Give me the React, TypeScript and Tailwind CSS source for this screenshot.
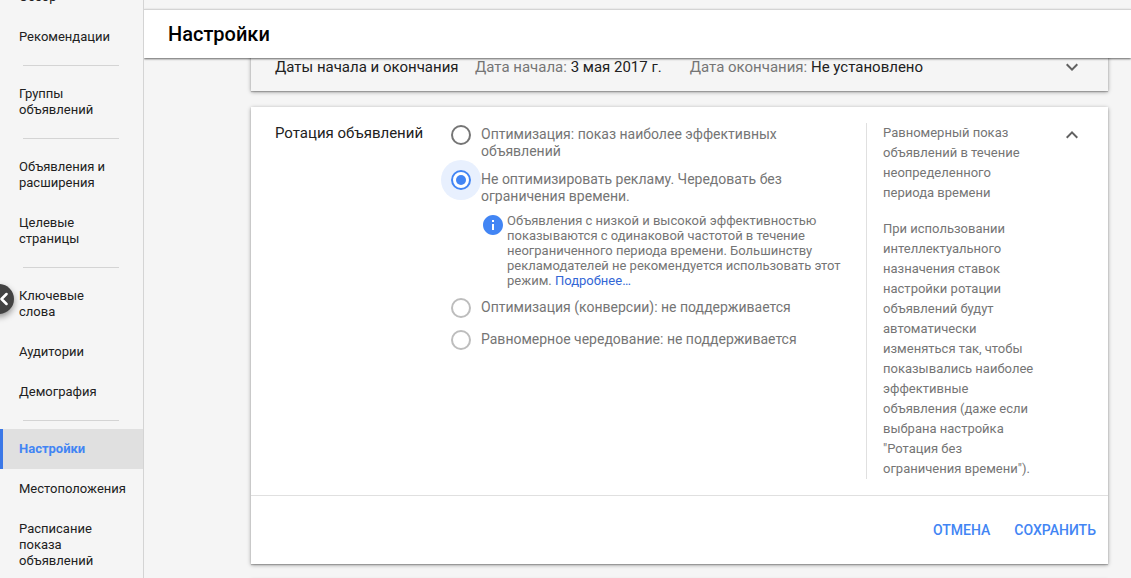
import { ChevronLeft } from 'lucide-react';
import { MdExpandLess, MdExpandMore, MdInfo } from 'react-icons/md';

type NavItem = { label: string; active?: boolean };

const navGroups: NavItem[][] = [
  [{ label: 'Обзор' }, { label: 'Рекомендации' }],
  [{ label: 'Группы объявлений' }],
  [{ label: 'Объявления и расширения' }, { label: 'Целевые страницы' }],
  [{ label: 'Ключевые слова' }, { label: 'Аудитории' }, { label: 'Демография' }],
  [
    { label: 'Настройки', active: true },
    { label: 'Местоположения' },
    { label: 'Расписание показа объявлений' },
  ],
];

function Sidebar() {
  return (
    <nav className="relative w-36 shrink-0 border-r border-[#d4d4d4]">
      {/* list is scrolled a little, so the first entry is cut off */}
      <div className="h-full overflow-hidden">
        <div className="-mt-[23px]">
          {navGroups.map((group, i) => (
            <div key={i}>
              {i > 0 && <hr className="my-2 mr-6 ml-[23px] border-t border-[#d4d4d4]" />}
              <ul>
                {group.map((item) => (
                  <li key={item.label}>
                    <a
                      href="#"
                      aria-current={item.active ? 'page' : undefined}
                      className={
                        item.active
                          ? 'block border-l-3 border-[#3b78e7] bg-[#e0e0e0] py-3 pr-6 pl-4 text-[13px] leading-4 font-bold text-[#4285f4]'
                          : 'block py-3 pr-6 pl-[19px] text-[13px] leading-4 text-[#212121]'
                      }
                    >
                      {item.label}
                    </a>
                  </li>
                ))}
              </ul>
            </div>
          ))}
        </div>
      </div>
      <button
        type="button"
        aria-label="Свернуть меню"
        className="absolute top-[284px] -left-4 flex size-[30px] items-center justify-end rounded-full bg-[#424242] text-white shadow-[0_3px_6px_rgba(0,0,0,0.4)]"
      >
        <ChevronLeft className="size-5" strokeWidth={3} />
      </button>
    </nav>
  );
}

type RadioOptionProps = {
  id: string;
  label: string;
  checked?: boolean;
  disabled?: boolean;
  children?: React.ReactNode;
};

function RadioOption({ id, label, checked, disabled, children }: RadioOptionProps) {
  return (
    <div className="flex min-h-[22px] items-start gap-[10px]">
      <input
        type="radio"
        id={id}
        name="rotation"
        defaultChecked={checked}
        disabled={disabled}
        className="grid size-5 shrink-0 appearance-none place-content-center rounded-full border-2 border-[#757575] before:size-[10px] before:rounded-full checked:border-[#4285f4] checked:shadow-[0_0_0_10px_#e8f0fe] checked:before:bg-[#4285f4] disabled:border-[#bdbdbd]"
      />
      <div className="pt-px">
        <label htmlFor={id} className="block text-sm leading-[17px] text-[#757575]">
          {label}
        </label>
        {children}
      </div>
    </div>
  );
}

const cardShadow = 'shadow-[0_1px_4px_rgba(0,0,0,0.37),0_1px_1px_rgba(0,0,0,0.2)]';

function DatesCard() {
  return (
    <section className={`-mt-[15px] flex h-12 items-center bg-[#f5f5f5] px-6 text-[15px] ${cardShadow}`}>
      <h2 className="w-[200px] text-[#212121]">Даты начала и окончания</h2>
      <p className="text-[#757575]">
        Дата начала: <span className="text-[#212121]">3 мая 2017 г.</span>
      </p>
      <p className="ml-7 text-[#757575]">
        Дата окончания: <span className="text-[#212121]">Не установлено</span>
      </p>
      <button type="button" aria-label="Развернуть" className="ml-auto text-[#616161]">
        <MdExpandMore className="size-6" />
      </button>
    </section>
  );
}

function RotationCard() {
  return (
    <section className={`mt-4 bg-white ${cardShadow}`}>
      <div className="flex items-start px-6 py-4">
        <h2 className="w-44 shrink-0 text-[15px] leading-5 text-[#212121]">
          Ротация объявлений
        </h2>
        <div className="flex flex-1 flex-col gap-[10px] pt-0.5 pr-4">
          <RadioOption id="optimize" label="Оптимизация: показ наиболее эффективных объявлений" />
          <RadioOption
            id="no-optimize"
            label="Не оптимизировать рекламу. Чередовать без ограничения времени."
            checked
          >
            <div className="flex items-start gap-0.5 pt-2">
              <MdInfo className="size-6 shrink-0 text-[#4285f4]" />
              <p className="text-[13px] leading-[15px] text-[#757575]">
                Объявления с низкой и высокой эффективностью показываются с одинаковой частотой в
                течение неограниченного периода времени. Большинству рекламодателей не
                рекомендуется использовать этот режим.{' '}
                <a href="#" className="text-[#3367d6]">
                  Подробнее…
                </a>
              </p>
            </div>
          </RadioOption>
          <RadioOption id="conversions" label="Оптимизация (конверсии): не поддерживается" disabled />
          <RadioOption id="even" label="Равномерное чередование: не поддерживается" disabled />
        </div>
        <aside className="flex w-[194px] shrink-0 flex-col gap-4 border-l border-[#e0e0e0] pr-5 pl-4 text-[13px] leading-5 text-[#757575]">
          <p>Равномерный показ объявлений в течение неопределенного периода времени</p>
          <p>
            При использовании интеллектуального назначения ставок настройки ротации объявлений
            будут автоматически изменяться так, чтобы показывались наиболее эффективные объявления
            (даже если выбрана настройка "Ротация без ограничения времени").
          </p>
        </aside>
        <button type="button" aria-label="Свернуть" className="text-[#616161]">
          <MdExpandLess className="size-6" />
        </button>
      </div>
      <footer className="flex h-[69px] items-center justify-end border-t border-[#e0e0e0] text-sm font-medium text-[#4285f4]">
        <button type="button" className="h-9 px-3">
          ОТМЕНА
        </button>
        <button type="button" className="h-9 px-3">
          СОХРАНИТЬ
        </button>
      </footer>
    </section>
  );
}

export default function App() {
  return (
    <div className="flex h-screen overflow-hidden bg-[#f5f5f5] font-[Roboto,sans-serif]">
      <Sidebar />
      <main className="flex min-w-0 flex-1 flex-col overflow-hidden pt-[9px]">
        <header className="z-10 border-t border-[#d4d4d4] bg-white px-6 py-[10px] shadow-[0_1px_2px_rgba(0,0,0,0.6)]">
          <h1 className="text-xl leading-7 font-medium text-black">Настройки</h1>
        </header>
        <div className="flex-1 pr-[23px] pl-[107px]">
          <DatesCard />
          <RotationCard />
          <section className={`mt-4 h-12 bg-[#f5f5f5] ${cardShadow}`} />
        </div>
      </main>
    </div>
  );
}
